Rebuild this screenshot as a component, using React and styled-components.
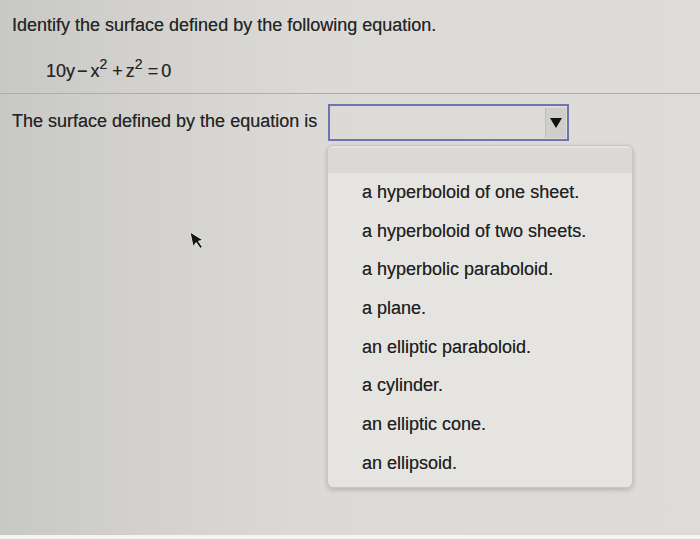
import styled, { createGlobalStyle } from "styled-components"

const GlobalStyle = createGlobalStyle`
  html, body {
    margin: 0;
    padding: 0;
  }
  body {
    font-family: "Liberation Sans", Arial, sans-serif;
    color: #262626;
  }
`

const Screen = styled.div`
  position: relative;
  width: 700px;
  height: 539px;
  overflow: hidden;
  background: linear-gradient(90deg, #c8c8c4 0%, #d2d1cd 20%, #dbdad6 45%, #dddcd8 100%);
  border-bottom: 4px solid #f4f4f2;
  box-sizing: border-box;
  text-shadow: 0 0 0.3px rgba(0, 0, 0, 0.5);
`

const Header = styled.div`
  padding: 14px 12px 0 12px;
`

const Title = styled.div`
  font-size: 18px;
  line-height: 22px;
`

const Equation = styled.div`
  margin: 24px 0 0 34px;
  height: 22px;
  font-size: 18px;
  line-height: 22px;
  white-space: nowrap;
`

const Op = styled.span`
  margin: 0 3px 0 2px;
`

const Sup = styled.span`
  display: inline-block;
  font-size: 14px;
  line-height: 10px;
  position: relative;
  top: -8px;
  margin-right: 3px;
`

const Divider = styled.hr`
  margin: 11px 0 0 0;
  border: none;
  border-top: 1px solid #aeada9;
  height: 0;
`

const QuestionRow = styled.div`
  display: flex;
  align-items: flex-start;
  padding: 10px 0 0 12px;
  gap: 8px;
`

const Label = styled.div`
  font-size: 18px;
  line-height: 22px;
  margin-top: 6px;
  width: 308px;
  white-space: nowrap;
`

const SelectWrap = styled.div`
  position: relative;
`

const SelectBox = styled.div`
  width: 241px;
  height: 37px;
  box-sizing: border-box;
  border: 2px solid #6d74b4;
  display: flex;
  justify-content: flex-end;
  align-items: center;
  padding-right: 1px;
`

const ArrowButton = styled.div`
  width: 20px;
  height: 30px;
  background: #cfceca;
  border-left: 1px solid #bdbcb8;
  display: flex;
  align-items: center;
  justify-content: center;

  &::after {
    content: "";
    border-left: 6px solid transparent;
    border-right: 6px solid transparent;
    border-top: 10px solid #111;
  }
`

const Menu = styled.ul`
  position: absolute;
  top: 41px;
  left: -1px;
  width: 306px;
  height: 343px;
  box-sizing: border-box;
  margin: 0;
  padding: 2px 0 0 0;
  list-style: none;
  background: #e5e4e0;
  border: 1px solid #c6c5c1;
  border-radius: 6px;
  box-shadow: 0 2px 5px rgba(0, 0, 0, 0.18);
`

const Option = styled.li`
  height: ${(props) => (props.blank ? "25px" : "38.7px")};
  display: flex;
  align-items: center;
  padding-left: 34px;
  font-size: 18px;
  color: #222;
  white-space: nowrap;
  background: ${(props) => (props.blank ? "#dad9d5" : "transparent")};
`

const Cursor = styled.svg`
  position: absolute;
  left: 189px;
  top: 231px;
`

const choices = [
  "a hyperboloid of one sheet.",
  "a hyperboloid of two sheets.",
  "a hyperbolic paraboloid.",
  "a plane.",
  "an elliptic paraboloid.",
  "a cylinder.",
  "an elliptic cone.",
  "an ellipsoid.",
]

const App = () => {
  return (
    <Screen>
      <GlobalStyle />
      <Header>
        <Title>Identify the surface defined by the following equation.</Title>
        <Equation>
          10y<Op>−</Op>x<Sup>2</Sup>
          <Op>+</Op>z<Sup>2</Sup>
          <Op>=</Op>0
        </Equation>
      </Header>
      <Divider />
      <QuestionRow>
        <Label>The surface defined by the equation is</Label>
        <SelectWrap>
          <SelectBox>
            <ArrowButton />
          </SelectBox>
          <Menu>
            <Option blank />
            {choices.map((c) => (
              <Option key={c}>{c}</Option>
            ))}
          </Menu>
        </SelectWrap>
      </QuestionRow>
      <Cursor width="16" height="22" viewBox="0 0 16 22">
        <path
          d="M1 1 L1 16 L4.8 12.6 L7.6 19.2 L10 18.2 L7.3 11.8 L12.2 11.8 Z"
          fill="#141414"
          stroke="#e8e8e6"
          strokeWidth="0.9"
          strokeLinejoin="round"
          transform="rotate(-12 1 1)"
        />
      </Cursor>
    </Screen>
  )
}

export default App
